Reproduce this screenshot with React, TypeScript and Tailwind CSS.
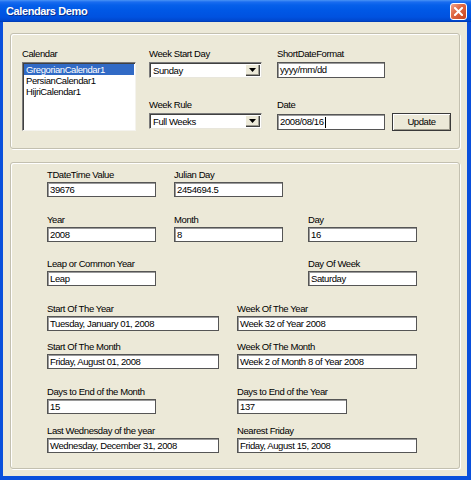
import React from "react";

function Label({ children, className = "" }: { children: React.ReactNode; className?: string }) {
  return <div className={`whitespace-nowrap ${className}`}>{children}</div>;
}

function Box({ children, className = "" }: { children?: React.ReactNode; className?: string }) {
  return (
    <div
      className={`bg-white border border-[#555] shadow-[inset_1px_1px_0_#9a9a9a] pl-[2px] whitespace-nowrap overflow-hidden flex items-center ${className}`}
    >
      {children}
    </div>
  );
}

function Field({ label, value, slot, box }: { label: string; value: string; slot: string; box: string }) {
  return (
    <div className={`flex flex-col shrink-0 ${slot}`}>
      <Label className="h-[13px] leading-[12px]">{label}</Label>
      <Box className={`h-[15px] leading-[13px] ${box}`}>{value}</Box>
    </div>
  );
}

function Combo({ text }: { text: string }) {
  return (
    <div className="h-[16px] w-[113px] bg-white border-t border-l border-[#7a7a7a] border-b border-r border-b-[#e8e6dc] border-r-[#e8e6dc] shadow-[inset_1px_1px_0_#404040] flex items-center">
      <span className="flex-1 pl-[3px] leading-[13px] whitespace-nowrap">{text}</span>
      <div className="w-[15px] h-[12px] mr-[1px] bg-[#ece9d8] shadow-[inset_1px_1px_0_#fff,inset_-1px_-1px_0_#404040,inset_-2px_-2px_0_#9c9a8f] flex items-center justify-center">
        <svg width="7" height="4" viewBox="0 0 7 4">
          <polygon points="0,0 7,0 3.5,4" fill="#000" />
        </svg>
      </div>
    </div>
  );
}

function ListBox() {
  return (
    <div className="h-[69px] w-[114px] bg-white border-t border-l border-[#7a7a7a] border-b border-r border-b-[#f4f3ee] border-r-[#f4f3ee] shadow-[inset_1px_1px_0_#404040] pt-[1px] pl-[1px] pr-[1px]">
      <div className="h-[11px] leading-[11px] bg-[#316ac5] text-white pl-[2px] whitespace-nowrap">GregorianCalendar1</div>
      <div className="h-[11px] leading-[11px] pl-[2px] whitespace-nowrap">PersianCalendar1</div>
      <div className="h-[11px] leading-[11px] pl-[2px] whitespace-nowrap">HijriCalendar1</div>
    </div>
  );
}

const groupCls =
  "border border-[#c3c0b0] rounded-[3px] shadow-[inset_1px_1px_0_#fff,1px_1px_0_#fff] shrink-0";

export default function App() {
  return (
    <div className="w-[471px] h-[480px] bg-[#0a50dc] flex flex-col font-['Liberation_Sans',Arial,sans-serif] text-[9.5px] tracking-[-0.4px] text-black overflow-hidden">
      {/* Title bar */}
      <div className="h-[22px] shrink-0 flex items-center pl-[6px] pr-[4px] bg-[linear-gradient(to_bottom,#4a93f5_0px,#1a6cf0_2px,#0660ea_5px,#0058e6_10px,#0052e0_17px,#0046cc_21px,#0037a8_22px)]">
        <span className="flex-1 text-white font-bold text-[11px] tracking-[-0.4px] [text-shadow:1px_1px_0_#0b2e8c]">
          Calendars Demo
        </span>
        <div className="w-[17px] h-[17px] rounded-[3px] border border-white bg-[linear-gradient(135deg,#f2a58c_0%,#e06a45_40%,#c8431f_100%)] flex items-center justify-center">
          <svg width="9" height="9" viewBox="0 0 9 9">
            <path d="M1 1 L8 8 M8 1 L1 8" stroke="#fff" strokeWidth="2" strokeLinecap="square" />
          </svg>
        </div>
      </div>

      {/* Client area */}
      <div className="flex-1 ml-[3px] mr-[4px] mb-[4px] bg-[#ece9d8] flex flex-col px-[7px]">
        {/* Group 1 */}
        <div className={`${groupCls} mt-[11px] h-[116px] flex pl-[11px] pt-[14px]`}>
          <div className="w-[114px] flex flex-col shrink-0">
            <Label className="h-[14px] leading-[12px]">Calendar</Label>
            <ListBox />
          </div>
          <div className="ml-[13px] w-[113px] flex flex-col shrink-0">
            <Label className="h-[14px] leading-[12px]">Week Start Day</Label>
            <Combo text="Sunday" />
            <Label className="h-[14px] leading-[12px] mt-[21px]">Week Rule</Label>
            <Combo text="Full Weeks" />
          </div>
          <div className="ml-[15px] flex flex-col shrink-0">
            <Label className="h-[14px] leading-[12px]">ShortDateFormat</Label>
            <Box className="h-[16px] w-[108px] leading-[14px]">yyyy/mm/dd</Box>
            <Label className="h-[14px] leading-[12px] mt-[21px]">Date</Label>
            <div className="flex items-center">
              <Box className="h-[16px] w-[108px] leading-[14px]">
                2008/08/16
                <span className="inline-block w-[1px] h-[11px] bg-black ml-[1px]" />
              </Box>
              <button className="ml-[7px] w-[59px] h-[18px] bg-[#ece9d8] border border-[#3a3a3a] shadow-[inset_1px_1px_0_#fff,inset_-1px_-1px_0_#9d9a8c] flex items-center justify-center leading-[14px]">
                Update
              </button>
            </div>
          </div>
        </div>

        {/* Group 2 */}
        <div className={`${groupCls} mt-[13px] h-[307px] flex flex-col pl-[36px] pt-[6px]`}>
          <div className="flex">
            <Field label="TDateTime Value" value="39676" slot="w-[127px]" box="w-[109px]" />
            <Field label="Julian Day" value="2454694.5" slot="w-[134px]" box="w-[109px]" />
          </div>
          <div className="flex mt-[17px]">
            <Field label="Year" value="2008" slot="w-[127px]" box="w-[109px]" />
            <Field label="Month" value="8" slot="w-[134px]" box="w-[109px]" />
            <Field label="Day" value="16" slot="w-[110px]" box="w-[109px]" />
          </div>
          <div className="flex mt-[16px]">
            <Field label="Leap or Common Year" value="Leap" slot="w-[261px]" box="w-[109px]" />
            <Field label="Day Of Week" value="Saturday" slot="w-[110px]" box="w-[109px]" />
          </div>
          <div className="flex mt-[17px]">
            <Field label="Start Of The Year" value="Tuesday, January 01, 2008" slot="w-[190px]" box="w-[172px]" />
            <Field label="Week Of The Year" value="Week 32 of Year 2008" slot="w-[181px]" box="w-[180px]" />
          </div>
          <div className="flex mt-[10px]">
            <Field label="Start Of The Month" value="Friday, August 01, 2008" slot="w-[190px]" box="w-[172px]" />
            <Field label="Week Of The Month" value="Week 2 of Month 8 of Year 2008" slot="w-[181px]" box="w-[180px]" />
          </div>
          <div className="flex mt-[17px]">
            <Field label="Days to End of the Month" value="15" slot="w-[190px]" box="w-[109px]" />
            <Field label="Days to End of the Year" value="137" slot="w-[111px]" box="w-[110px]" />
          </div>
          <div className="flex mt-[11px]">
            <Field label="Last Wednesday of the year" value="Wednesday, December 31, 2008" slot="w-[190px]" box="w-[172px]" />
            <Field label="Nearest Friday" value="Friday, August 15, 2008" slot="w-[181px]" box="w-[180px]" />
          </div>
        </div>
      </div>
    </div>
  );
}
